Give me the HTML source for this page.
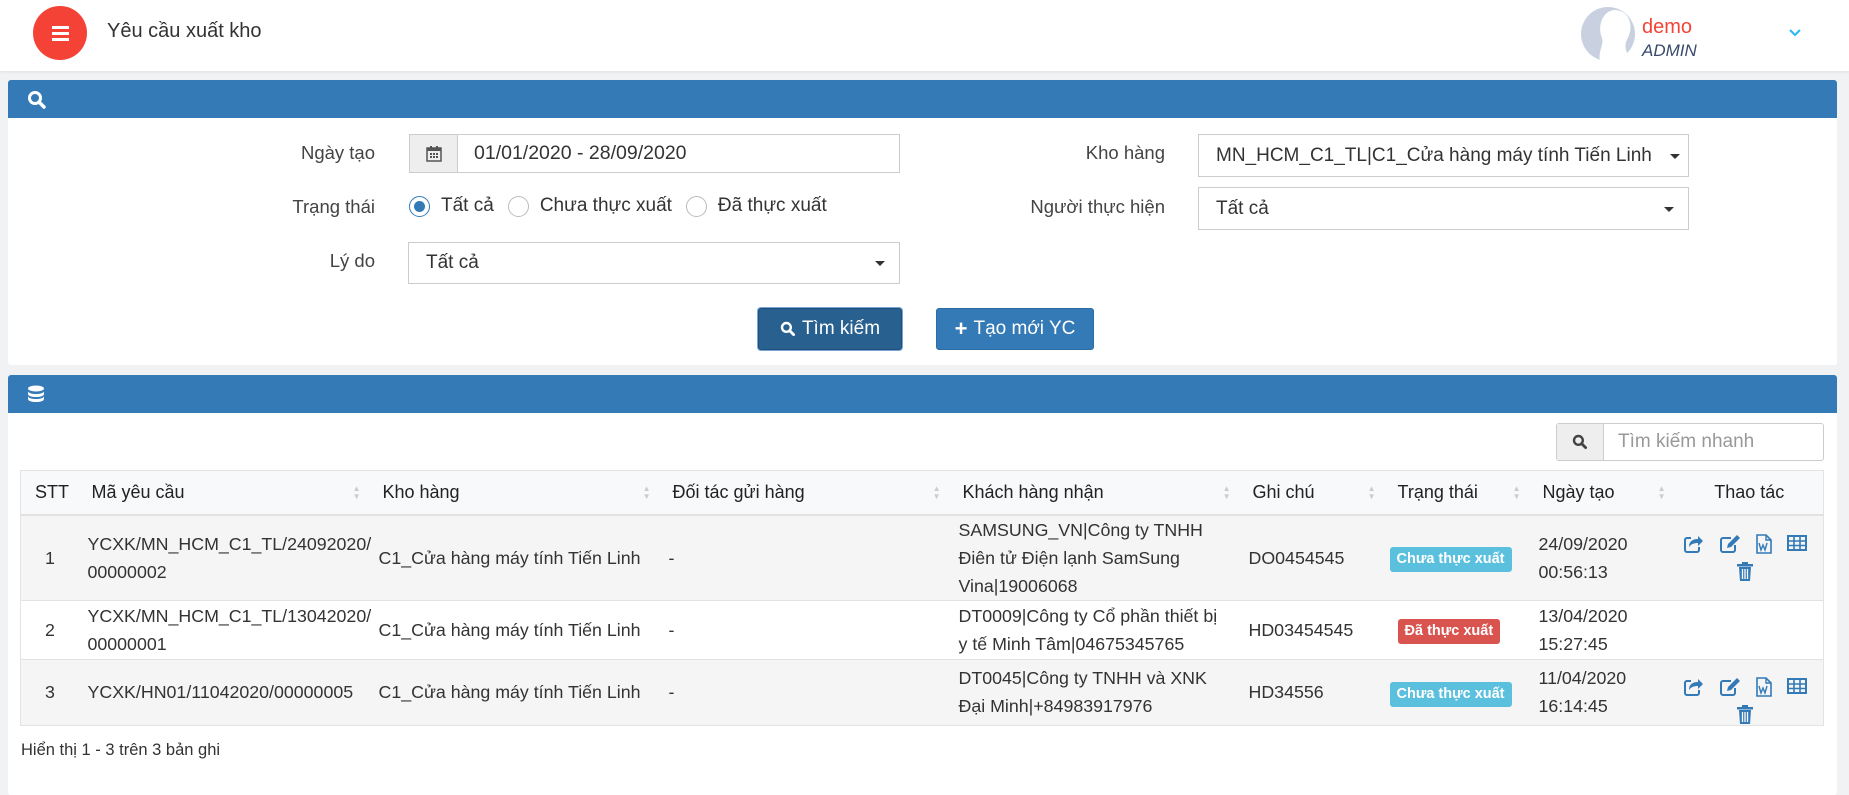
<!DOCTYPE html>
<html><head><meta charset="utf-8"><style>
*{box-sizing:border-box;margin:0;padding:0}
body{width:1849px;height:787px;background:#f1f2f4;font-family:"Liberation Sans",sans-serif;color:#333;font-size:18px;position:relative;overflow:hidden}
.abs{position:absolute}
.hdr{left:0;top:0;width:1849px;height:71px;background:#fff;box-shadow:0 1px 3px rgba(0,0,0,.08)}
.panel{background:#fff;left:8px;width:1829px;border-radius:3px}
.ph{position:absolute;left:0;top:0;width:100%;height:38px;background:#337ab7;border-radius:3px 3px 0 0}
.lbl{text-align:right;width:250px;font-size:18.5px;color:#444}
.box{border:1px solid #ccc;background:#fff;font-size:19px;padding-left:17px;display:flex;align-items:center}
.caret{position:absolute;right:14px;top:50%;margin-top:-2px;border-left:5px solid transparent;border-right:5px solid transparent;border-top:5px solid #333}
.btn{color:#fff;font-size:19px;border-radius:3px;display:flex;align-items:center;justify-content:center;gap:6px}
.radio{width:21px;height:21px;border:1px solid #bbb;border-radius:50%;display:inline-block;vertical-align:middle;margin-right:11px;position:relative}
table{border-collapse:collapse;position:absolute;left:20px;top:470px;width:1804px;font-size:17.8px;border:1px solid #e3e3e3;table-layout:fixed}
th{height:44px;background:#f8f9fb;text-align:left;font-weight:normal;font-size:18px;border-bottom:2px solid #e2e2e2;padding-left:12px;position:relative;color:#222;white-space:nowrap}
td{padding-left:12px;line-height:28px;border-top:1px solid #e2e2e2;white-space:nowrap}
tr.o td{background:#f5f5f5}
.s{position:absolute;right:10px;top:14px;font-size:8px;color:#ccc;line-height:8px}
.bdg{display:inline-block;color:#fff;font-size:14.5px;font-weight:bold;padding:2px 7px;border-radius:3px;line-height:21px}
</style></head><body>
<div class="abs hdr">
 <div class="abs" style="left:33px;top:6px;width:54px;height:54px;border-radius:50%;background:#f44336"></div>
 <div class="abs" style="left:52px;top:26px;width:17px;height:3px;background:#fff;box-shadow:0 6px 0 #fff,0 12px 0 #fff"></div>
 <div class="abs" style="left:107px;top:20px;font-size:20px;color:#333">Yêu cầu xuất kho</div>
 <svg class="abs" style="left:1580px;top:6px" width="56" height="56" viewBox="0 0 56 56"><circle cx="28" cy="28" r="27" fill="#c9d1e1"/><path d="M20 56 C18 44 24 40 22 32 C18 24 20 6 34 4 C48 4 52 16 50 26 C48 34 44 36 46 44 C48 50 50 52 52 50 A27 27 0 0 1 20 56Z" fill="#fff"/></svg>
 <div class="abs" style="left:1642px;top:16px;font-size:20px;color:#f44336">demo</div>
 <div class="abs" style="left:1642px;top:41px;font-size:17px;font-style:italic;color:#3a4a6a">ADMIN</div>
 <svg class="abs" style="left:1788px;top:28px" width="14" height="9" viewBox="0 0 14 9"><path d="M2 2l5 5 5-5" fill="none" stroke="#29b6f6" stroke-width="2"/></svg>
</div>

<div class="abs panel" style="top:80px;height:285px">
 <div class="ph"><svg class="abs" style="left:19px;top:10px" width="20" height="20" viewBox="0 0 20 20"><circle cx="8" cy="8" r="5.5" fill="none" stroke="#fff" stroke-width="3"/><line x1="12" y1="12" x2="17" y2="17" stroke="#fff" stroke-width="3.5" stroke-linecap="round"/></svg></div>
</div>
<div class="abs lbl" style="left:125px;top:142px">Ngày tạo</div>
<div class="abs" style="left:409px;top:134px;width:491px;height:39px;border:1px solid #ccc;display:flex;background:#fff">
 <div style="width:48px;background:#eee;border-right:1px solid #ccc;display:flex;align-items:center;justify-content:center"><svg width="16" height="17" viewBox="0 0 16 17"><rect x="1" y="3" width="14" height="13" fill="none" stroke="#555" stroke-width="1.5"/><rect x="1" y="3" width="14" height="3" fill="#555"/><path d="M4 8h2v2H4zM7 8h2v2H7zM10 8h2v2h-2zM4 11h2v2H4zM7 11h2v2H7zM10 11h2v2h-2z" fill="#555"/><rect x="4" y="1" width="2" height="4" fill="#555"/><rect x="10" y="1" width="2" height="4" fill="#555"/></svg></div>
 <div style="padding-left:16px;font-size:19.5px;display:flex;align-items:center">01/01/2020 - 28/09/2020</div>
</div>
<div class="abs lbl" style="left:125px;top:196px">Trạng thái</div>
<div class="abs" style="left:409px;top:193px;font-size:19px;display:flex;align-items:center;height:26px;white-space:nowrap">
 <span class="radio" style="border-color:#337ab7"><span class="abs" style="left:4px;top:4px;width:11px;height:11px;border-radius:50%;background:#337ab7"></span></span><span style="margin-right:14px">Tất cả</span>
 <span class="radio"></span><span style="margin-right:14px">Chưa thực xuất</span>
 <span class="radio"></span><span>Đã thực xuất</span>
</div>
<div class="abs lbl" style="left:125px;top:250px">Lý do</div>
<div class="abs box" style="left:408px;top:242px;width:492px;height:42px">Tất cả<span class="caret"></span></div>
<div class="abs lbl" style="left:915px;top:142px">Kho hàng</div>
<div class="abs box" style="left:1198px;top:134px;width:491px;height:43px;white-space:nowrap;overflow:hidden">MN_HCM_C1_TL|C1_Cửa hàng máy tính Tiến Linh<span class="caret" style="right:8px"></span></div>
<div class="abs lbl" style="left:915px;top:196px">Người thực hiện</div>
<div class="abs box" style="left:1198px;top:187px;width:491px;height:43px">Tất cả<span class="caret"></span></div>
<div class="abs btn" style="left:758px;top:308px;width:144px;height:42px;background:#286090;border:1px solid #1f4e7a;box-shadow:0 0 0 1px #7aa7d6"><svg width="16" height="16" viewBox="0 0 20 20"><circle cx="8" cy="8" r="5.5" fill="none" stroke="#fff" stroke-width="3"/><line x1="12" y1="12" x2="17" y2="17" stroke="#fff" stroke-width="3.5" stroke-linecap="round"/></svg>Tìm kiếm</div>
<div class="abs btn" style="left:936px;top:308px;width:158px;height:42px;background:#337ab7;border:1px solid #2e6da4"><b style="font-size:22px">+</b>Tạo mới YC</div>

<div class="abs panel" style="top:375px;height:420px">
 <div class="ph"><svg class="abs" style="left:19px;top:10px" width="18" height="19" viewBox="0 0 18 19"><ellipse cx="9" cy="3.5" rx="8" ry="3" fill="#fff"/><path d="M1 6c0 4 16 4 16 0v3c0 4-16 4-16 0zM1 11c0 4 16 4 16 0v3c0 4-16 4-16 0z" fill="#fff"/></svg></div>
</div>
<div class="abs" style="left:1556px;top:423px;width:268px;height:38px;border:1px solid #ccc;border-radius:3px;display:flex;background:#fff">
 <div style="width:47px;background:#eee;border-right:1px solid #ccc;display:flex;align-items:center;justify-content:center"><svg width="16" height="16" viewBox="0 0 20 20"><circle cx="8" cy="8" r="5.5" fill="none" stroke="#444" stroke-width="3"/><line x1="12" y1="12" x2="17" y2="17" stroke="#444" stroke-width="3.5" stroke-linecap="round"/></svg></div>
 <div style="padding-left:14px;color:#999;font-size:19px;display:flex;align-items:center">Tìm kiếm nhanh</div>
</div>
<table>
<colgroup><col style="width:59px"><col style="width:291px"><col style="width:290px"><col style="width:290px"><col style="width:290px"><col style="width:145px"><col style="width:145px"><col style="width:145px"><col></colgroup>
<tr><th style="padding-left:14px">STT</th><th>Mã yêu cầu<span class="s">▲<br>▼</span></th><th>Kho hàng<span class="s">▲<br>▼</span></th><th>Đối tác gửi hàng<span class="s">▲<br>▼</span></th><th>Khách hàng nhận<span class="s">▲<br>▼</span></th><th>Ghi chú<span class="s">▲<br>▼</span></th><th>Trạng thái<span class="s">▲<br>▼</span></th><th>Ngày tạo<span class="s">▲<br>▼</span></th><th style="text-align:center;padding:0">Thao tác</th></tr>
<tr class="o" style="height:84px"><td style="padding-left:24px">1</td><td style="padding-left:8px">YCXK/MN_HCM_C1_TL/24092020/<br>00000002</td><td style="padding-left:8px">C1_Cửa hàng máy tính Tiến Linh</td><td style="padding-left:8px">-</td><td style="padding-left:8px">SAMSUNG_VN|Công ty TNHH<br>Điên tử Điện lạnh SamSung<br>Vina|19006068</td><td style="padding-left:8px">DO0454545</td><td style="padding-left:4px"><span class="bdg" style="background:#5bc0de">Chưa thực xuất</span></td><td style="padding-left:8px">24/09/2020<br>00:56:13</td><td></td></tr>
<tr style="height:59px"><td style="padding-left:24px">2</td><td style="padding-left:8px">YCXK/MN_HCM_C1_TL/13042020/<br>00000001</td><td style="padding-left:8px">C1_Cửa hàng máy tính Tiến Linh</td><td style="padding-left:8px">-</td><td style="padding-left:8px">DT0009|Công ty Cổ phần thiết bị<br>y tế Minh Tâm|04675345765</td><td style="padding-left:8px">HD03454545</td><td style="padding-left:12px"><span class="bdg" style="background:#d9534f">Đã thực xuất</span></td><td style="padding-left:8px">13/04/2020<br>15:27:45</td><td></td></tr>
<tr class="o" style="height:66px"><td style="padding-left:24px">3</td><td style="padding-left:8px">YCXK/HN01/11042020/00000005</td><td style="padding-left:8px">C1_Cửa hàng máy tính Tiến Linh</td><td style="padding-left:8px">-</td><td style="padding-left:8px">DT0045|Công ty TNHH và XNK<br>Đại Minh|+84983917976</td><td style="padding-left:8px">HD34556</td><td style="padding-left:4px"><span class="bdg" style="background:#5bc0de">Chưa thực xuất</span></td><td style="padding-left:8px">11/04/2020<br>16:14:45</td><td></td></tr>
</table>

<svg class="abs" style="left:1680px;top:533px" width="135" height="50" viewBox="0 0 135 50">
 <g id="ic" fill="none" stroke="#337ab7" stroke-width="2">
  <path d="M11 5H7a2 2 0 0 0-2 2v10a2 2 0 0 0 2 2h10a2 2 0 0 0 2-2v-3"/>
  <path d="M9 14c0-6 4-8 9-8V3l5 5-5 5V10c-4 0-7 1-9 4z" fill="#337ab7" stroke="none"/>
  <path d="M51 5H43a2 2 0 0 0-2 2v10a2 2 0 0 0 2 2h10a2 2 0 0 0 2-2v-5"/>
  <path d="M47 15l1-4 9-9 3 3-9 9z" fill="#337ab7" stroke="none"/>
  <path d="M77 2h9l5 5v13H77z" stroke-width="1.6"/>
  <path d="M86 2v5h5" stroke-width="1.4"/>
  <path d="M79 10l2 7 2-5 2 5 2-7" stroke-width="1.4"/>
  <rect x="108" y="3" width="18" height="14" stroke-width="2"/>
  <path d="M108 8h18M108 12.5h18M114 3v14M120 3v14" stroke-width="1.6"/>
 </g>
 <g fill="#337ab7"><rect x="57" y="31" width="16" height="2.5"/><rect x="62" y="29" width="6" height="2"/><path d="M59 34h12l-1 14H60z"/></g>
 <g stroke="#fff" stroke-width="1.3"><path d="M62.5 36v10M65 36v10M67.5 36v10"/></g>
</svg>
<svg class="abs" style="left:1680px;top:676px" width="135" height="50" viewBox="0 0 135 50">
 <g fill="none" stroke="#337ab7" stroke-width="2">
  <path d="M11 5H7a2 2 0 0 0-2 2v10a2 2 0 0 0 2 2h10a2 2 0 0 0 2-2v-3"/>
  <path d="M9 14c0-6 4-8 9-8V3l5 5-5 5V10c-4 0-7 1-9 4z" fill="#337ab7" stroke="none"/>
  <path d="M51 5H43a2 2 0 0 0-2 2v10a2 2 0 0 0 2 2h10a2 2 0 0 0 2-2v-5"/>
  <path d="M47 15l1-4 9-9 3 3-9 9z" fill="#337ab7" stroke="none"/>
  <path d="M77 2h9l5 5v13H77z" stroke-width="1.6"/>
  <path d="M86 2v5h5" stroke-width="1.4"/>
  <path d="M79 10l2 7 2-5 2 5 2-7" stroke-width="1.4"/>
  <rect x="108" y="3" width="18" height="14" stroke-width="2"/>
  <path d="M108 8h18M108 12.5h18M114 3v14M120 3v14" stroke-width="1.6"/>
 </g>
 <g fill="#337ab7"><rect x="57" y="31" width="16" height="2.5"/><rect x="62" y="29" width="6" height="2"/><path d="M59 34h12l-1 14H60z"/></g>
 <g stroke="#fff" stroke-width="1.3"><path d="M62.5 36v10M65 36v10M67.5 36v10"/></g>
</svg>
<div class="abs" style="left:21px;top:741px;font-size:16.5px;color:#333">Hiển thị 1 - 3 trên 3 bản ghi</div>
</body></html>
